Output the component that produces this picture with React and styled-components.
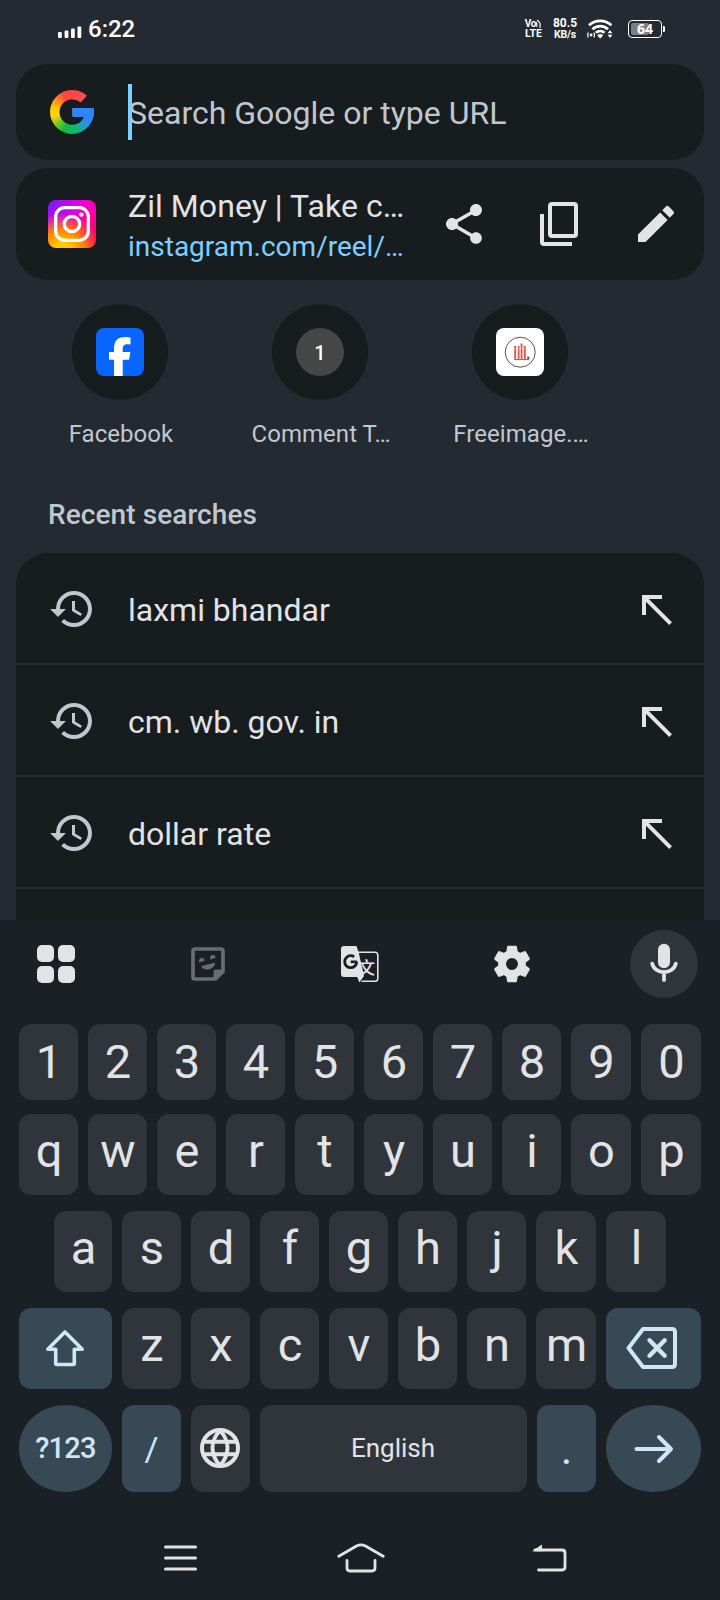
import React from "react";
import styled, { createGlobalStyle } from "styled-components";
import { MdShare, MdEdit, MdHistory, MdNorthWest, MdSettings } from "react-icons/md";

const c = {
  page: "#232a31",
  card: "#171c1f",
  line: "#24292d",
  text: "#e2e3e5",
  muted: "#c1c7ce",
  link: "#7cd0ff",
  board: "#1b1f26",
  key: "#2f353b",
  accentKey: "#374955",
  accentText: "#cfe5f8",
};

const GlobalStyle = createGlobalStyle`
  * { box-sizing: border-box; }
  body {
    margin: 0;
    background: ${c.page};
    font-family: Roboto, "Noto Sans", sans-serif;
    color: ${c.text};
  }
  svg { display: block; flex: none; }
`;

const Screen = styled.div`
  width: 720px;
  height: 1600px;
  display: flex;
  flex-direction: column;
  background: ${c.page};
  overflow: hidden;
`;

/* ---------- status bar ---------- */

const StatusBar = styled.header`
  flex: none;
  height: 64px;
  padding: 0 58px 7px 58px;
  display: flex;
  align-items: center;
  color: #fff;
`;

const Clock = styled.span`
  margin-left: 6px;
  font-size: 24px;
  font-weight: 500;
  line-height: 28px;
  padding-top: 1px;
`;

const StatusIcons = styled.div`
  margin-left: auto;
  display: flex;
  align-items: center;
`;

const Stacked = styled.div`
  display: flex;
  flex-direction: column;
  align-items: center;
  width: ${(p) => p.$width}px;
  margin-right: ${(p) => p.$after}px;
  font-weight: 700;
  white-space: nowrap;
`;

const TinyLine = styled.span`
  display: flex;
  font-size: ${(p) => p.$size}px;
  line-height: ${(p) => p.$leading || 10}px;
  letter-spacing: ${(p) => p.$track || 0}px;
`;

const Battery = styled.div`
  position: relative;
  width: 34px;
  height: 18px;
  margin-left: 15px;
  border: 1.5px solid #fff;
  border-radius: 4px;
  padding: 2px;
  display: flex;

  &::after {
    content: "";
    position: absolute;
    right: -3.5px;
    top: 5px;
    width: 2px;
    height: 6px;
    border-radius: 0 1px 1px 0;
    background: #fff;
  }
`;

const Charge = styled.div`
  width: 64%;
  border-radius: 2px;
  background: #7b8085;
`;

const BatteryLevel = styled.span`
  position: absolute;
  inset: 0;
  text-align: center;
  font: 700 14px/16px "Open Sans", sans-serif;
`;

/* ---------- omnibox ---------- */

const Card = styled.section`
  flex: none;
  height: ${(p) => p.$height}px;
  margin: 0 16px ${(p) => p.$after || 0}px;
  padding: 0 24px 0 32px;
  border-radius: 32px;
  background: ${c.card};
  display: flex;
  align-items: center;
`;

const GoogleMark = styled.div`
  width: 44px;
  height: 44px;
  margin: 0 34px 0 2px;
  background: linear-gradient(#3186ff, #3186ff) 22px 17px / 22px 10px no-repeat,
    conic-gradient(
      #ff4641 0deg,
      #fd4b5f 45deg,
      #3186ff 70deg,
      #3186ff 118deg,
      #22a0b8 143deg,
      #0ebc5f 172deg,
      #14bb45 205deg,
      #7fc91d 232deg,
      #ffd314 258deg,
      #ffcc00 282deg,
      #ff8c1e 308deg,
      #ff4641 335deg,
      #ff4641 360deg
    );
  clip-path: path(
    "M37 5.8 A22 22 0 1 0 44 22 Q44 19.9 43.7 18 H22.4 V26.8 H34 A12.7 12.7 0 1 1 30.6 12.6 Z"
  );
`;

const Placeholder = styled.div`
  position: relative;
  font-size: 32px;
  line-height: 40px;
  padding-top: 1px;
  color: ${c.muted};
  white-space: nowrap;
`;

const Caret = styled.i`
  position: absolute;
  left: 0;
  top: -8px;
  width: 4px;
  height: 56px;
  background: ${c.link};
`;

const InstagramTile = styled.div`
  width: 48px;
  height: 48px;
  margin-right: 32px;
  border-radius: 8px;
  background: radial-gradient(circle at 30% 108%, #ffc800 0 14%, #ff8a00 34%, transparent 62%),
    radial-gradient(circle at 0% 0%, #6a1bff 0%, #b80cf0 28%, transparent 55%),
    linear-gradient(160deg, #f400d8 20%, #ff0090 55%, #ff0060 85%);
`;

const PageInfo = styled.div`
  width: 280px;
  margin-right: 32px;
  align-self: flex-start;
  padding-top: 18px;
`;

const PageTitle = styled.div`
  font-size: 32px;
  line-height: 40px;
  letter-spacing: 0.05px;
  white-space: nowrap;
`;

const PageUrl = styled.div`
  font-size: 28px;
  line-height: 41px;
  color: ${c.link};
  white-space: nowrap;
`;

const Actions = styled.div`
  display: flex;
  gap: 48px;
`;

/* ---------- shortcuts ---------- */

const Shortcuts = styled.nav`
  flex: none;
  display: flex;
  height: 217px;
  padding: 24px 0 0 20px;
`;

const Shortcut = styled.div`
  width: 200px;
  display: flex;
  flex-direction: column;
  align-items: center;
  gap: 18px;
`;

const ShortcutLabel = styled.span`
  padding-left: 2px;
  font-size: 24px;
  line-height: 32px;
  letter-spacing: 0.05px;
  color: ${c.muted};
`;

const Disc = styled.div`
  width: 96px;
  height: 96px;
  border-radius: 50%;
  background: ${c.card};
  display: flex;
  align-items: center;
  justify-content: center;
`;

const Monogram = styled.span`
  width: 48px;
  height: 48px;
  border-radius: 50%;
  background: #454745;
  color: #fff;
  text-align: center;
  font-size: 20px;
  font-weight: 500;
  line-height: 50px;
`;

/* ---------- recent searches ---------- */

const SectionTitle = styled.h2`
  flex: none;
  margin: 0 0 20px;
  padding-left: 48px;
  font-size: 28px;
  font-weight: 500;
  line-height: 36px;
  letter-spacing: 0.08px;
  color: ${c.muted};
`;

const RecentList = styled.ul`
  flex: 1;
  min-height: 0;
  overflow: hidden;
  list-style: none;
  margin: 0 16px;
  padding: 0;
  border-radius: 32px 32px 0 0;
  background: ${c.card};
`;

const RecentItem = styled.li`
  height: 112px;
  border-bottom: 2px solid ${c.line};
  padding: 1px 24px 0 32px;
  display: flex;
  align-items: center;
  font-size: 32px;

  svg:first-child { color: ${c.muted}; }
`;

const Query = styled.span`
  flex: 1;
  padding: 2px 0 0 32px;
`;

/* ---------- keyboard ---------- */

const Keyboard = styled.section`
  flex: none;
  height: 680px;
  background: ${c.board};
  display: flex;
  flex-direction: column;
`;

const Tools = styled.div`
  display: flex;
  justify-content: space-between;
  height: 78px;
  padding: 10px 22px 0;
  margin-bottom: 26px;
`;

const Tool = styled.div`
  width: 68px;
  height: 68px;
  border-radius: 50%;
  display: flex;
  align-items: center;
  justify-content: center;
  color: ${c.text};
  background: ${(p) => (p.$filled ? c.key : "transparent")};
`;

const GearIcon = styled(MdSettings)`
  stroke: ${c.text};
  stroke-width: 0.7px;
  stroke-linejoin: round;

  path[fill="none"] { stroke: none; }
`;

const KeyRow = styled.div`
  display: flex;
  gap: 10px;
  height: ${(p) => p.$height}px;
  margin-bottom: ${(p) => p.$after}px;
  padding-left: ${(p) => p.$indent || 19}px;
`;

const Key = styled.div`
  width: ${(p) => p.$width || 59}px;
  border-radius: ${(p) => (p.$round ? "47px / 43.5px" : "12px")};
  background: ${(p) => (p.$accent ? c.accentKey : c.key)};
  color: ${(p) => (p.$accent ? c.accentText : c.text)};
  display: flex;
  align-items: center;
  justify-content: center;
  font-size: ${(p) => p.$size || 47}px;
  font-weight: ${(p) => p.$weight || 400};
  letter-spacing: ${(p) => p.$track || 0}px;
  line-height: 56px;
  padding: 0 ${(p) => p.$nudge || 0}px ${(p) => p.$lift || 0}px 0;
`;

const LetterKey = styled(Key)`
  padding-left: 1px;
`;

const SystemNav = styled.footer`
  flex: 1;
  display: flex;
  align-items: center;
  gap: 140px;
  padding: 24px 0 0 164px;

  svg:last-child { margin-left: 7px; }
`;

/* ---------- drawings ---------- */

const SignalBars = () => (
  <svg width="24" height="18" viewBox="0 0 24 18" fill="#fff">
    <rect x="0" y="12" width="3.8" height="6" rx="1" />
    <rect x="6.6" y="10.5" width="3.8" height="7.5" rx="1" />
    <rect x="13" y="8.5" width="3.8" height="9.5" rx="1" />
    <rect x="19.5" y="6.5" width="3.8" height="11.5" rx="1" />
  </svg>
);

const VoiceWaves = () => (
  <svg width="6" height="10" viewBox="0 0 6 10" fill="none" stroke="#fff" strokeWidth="1.2">
    <path d="M0 3.2q1.6 1.8 .4 4.6M1 1q4.2 2.6 2.8 7.8" />
  </svg>
);

const Wifi = () => (
  <svg width="26" height="20" viewBox="0 0 26 20" fill="none" stroke="#fff">
    <path d="M2 6.3a16.2 16.2 0 0 1 22.4 0" strokeWidth="2.8" />
    <path d="M5.4 10.2a11.3 11.3 0 0 1 15.6 0" strokeWidth="2.8" />
    <path d="M8.8 13.8a6.6 6.6 0 0 1 8.8 0" strokeWidth="2.6" />
    <path d="M10.2 16.4q3-2.6 6 0l-3 3z" fill="#fff" stroke="none" />
    <path d="M1.4 13.6q-1.3 2.4 0 4.8M6.8 13.6q1.3 2.4 0 4.8" strokeWidth="1.2" />
    <circle cx="4.1" cy="16" r="1.4" fill="#fff" stroke="none" />
    <path d="M23 11l2.4 3.3h-4.8zM23 19l2.4-3.3h-4.8z" fill="#fff" stroke="none" />
  </svg>
);

const InstagramGlyph = () => (
  <svg width="48" height="48" viewBox="0 0 48 48" fill="none" stroke="#fff" strokeWidth="3.3">
    <rect x="7.7" y="7.7" width="32.6" height="32.6" rx="9" />
    <circle cx="24" cy="24" r="7.7" />
    <circle cx="33.4" cy="14.6" r="2.2" fill="#fff" stroke="none" />
  </svg>
);

const CopyIcon = () => (
  <svg width="48" height="48" viewBox="0 0 48 48" fill="none" stroke={c.text} strokeWidth="4">
    <rect x="14" y="4" width="26" height="32" rx="2" />
    <path d="M6 14V42q0 2 2 2H36" />
  </svg>
);

const FacebookTile = () => (
  <svg width="48" height="48" viewBox="0 0 48 48">
    <rect width="48" height="48" rx="8" fill="#0866ff" />
    <path
      d="M18 48V31.7h-5V24h5v-3.2C18 12.8 21.6 9 29.3 9c1.5 0 4.1.3 5.2.6v6.8c-.6-.1-1.6-.1-2.8-.1-3.8 0-5 1.5-5 5V24h7.7l-1.3 7.7h-6.4V48z"
      fill="#fff"
    />
  </svg>
);

const FreeimageTile = () => (
  <svg width="48" height="48" viewBox="0 0 48 48">
    <rect width="48" height="48" rx="8" fill="#fff" />
    <circle cx="24.2" cy="24.2" r="15" fill="none" stroke="#555" strokeWidth="1" />
    <g fill="#e0574d">
      <rect x="18.2" y="18" width="1.9" height="12.8" />
      <rect x="21.8" y="18" width="1.7" height="12.8" />
      <rect x="24.6" y="15.5" width="1.9" height="15.3" />
      <rect x="27.8" y="18" width="2" height="12.8" />
    </g>
    <path d="M18 20.4h12" stroke="#fff" strokeWidth=".6" opacity=".5" />
    <path d="M18.2 31.5h15" stroke="#777" strokeWidth="1.2" />
    <circle cx="32.3" cy="29.8" r="1.2" fill="#555" />
  </svg>
);

const GridIcon = () => (
  <svg width="38" height="38" viewBox="0 0 38 38" fill={c.text}>
    <rect width="17" height="17" rx="5" />
    <rect x="21" width="17" height="17" rx="5" />
    <rect y="21" width="17" height="17" rx="5" />
    <rect x="21" y="21" width="17" height="17" rx="5" />
  </svg>
);

const StickerIcon = () => (
  <svg width="34" height="34" viewBox="0 0 34 34" fill="#696c71">
    <path d="M4 2h26q2 0 2 2v20.5L24.5 32H4q-2 0-2-2V4q0-2 2-2z" fill="none" stroke="#696c71" strokeWidth="3.7" />
    <path d="M22.5 32.5V25q0-2.5 2.5-2.5h8z" />
    <path d="M8 15.3c-.6-5.5 5.3-6.3 5.600-1.200zM19 12.400c-.7-5.500 5-6.300 5.600-1.300z" />
    <path d="M10 19.200l14.200-3.800c-.5 8-11.500 9-14.200 3.800z" />
  </svg>
);

const TranslateIcon = () => (
  <svg width="38" height="38" viewBox="0 0 38 38">
    <path d="M17 7.2h17q2.8 0 2.8 2.8v23.5q0 2.8-2.8 2.8H20.5" fill="none" stroke={c.text} strokeWidth="1.6" />
    <path d="M3 1h12.5l2.3 7L23 31l-4.7 6.5-2-5.5H3q-3 0-3-3V4q0-3 3-3z" fill={c.text} />
    <text x="17" y="28.6" fontSize="17" fontFamily="Noto Sans CJK SC, sans-serif" fontWeight="500" fill={c.text}>文</text>
    <circle cx="9.7" cy="16.7" r="6" fill="none" stroke={c.board} strokeWidth="2.8" strokeDasharray="31.2 6.5" />
    <path d="M9.7 16.8h6.3" stroke={c.board} strokeWidth="2.6" fill="none" />
  </svg>
);

const MicIcon = () => (
  <svg width="48" height="48" viewBox="0 0 24 24" fill="none" stroke={c.text} strokeWidth="1.9" strokeLinecap="round">
    <rect x="9" y="1.9" width="6" height="12.2" rx="3" fill={c.text} stroke="none" />
    <path d="M6.1 11.8a6 5.3 0 0 0 11.8 0M12 17.5v2.5" />
  </svg>
);

const ShiftIcon = () => (
  <svg width="40" height="40" viewBox="0 0 40 40" fill="none" stroke={c.accentText} strokeWidth="3.6" strokeLinejoin="round">
    <path d="M20 4L37.2 21.3H29.3V35.5q0 1-1 1H11.7q-1 0-1-1V21.3H2.8z" />
  </svg>
);

const BackspaceIcon = () => (
  <svg width="52" height="44" viewBox="0 0 52 44" fill="none" stroke={c.accentText} strokeWidth="4" strokeLinejoin="round" strokeLinecap="round">
    <path d="M17 3H46q3 0 3 3V38q0 3-3 3H17L2.5 22z" />
    <path d="M23.500 14.300l15.200 15.400M38.700 14.300L23.500 29.700" strokeWidth="4.400" />
  </svg>
);

const GlobeIcon = () => (
  <svg width="40" height="40" viewBox="0 0 40 40" fill="none" stroke={c.text} strokeWidth="4">
    <circle cx="20" cy="20" r="18" />
    <path d="M20 2.5q-7.5 8-7.5 17.5T20 37.5Q27.5 29.5 27.5 20T20 2.5zM3.5 13.8h33M3.5 26.2h33" strokeWidth="3.9" />
  </svg>
);

const GoIcon = () => (
  <svg width="40" height="30" viewBox="0 0 40 30" fill="none" stroke={c.accentText} strokeWidth="4" strokeLinecap="round" strokeLinejoin="round">
    <path d="M2.5 15H36M25 3l12 12-12 12" />
  </svg>
);

const MenuIcon = () => (
  <svg width="33" height="26" viewBox="0 0 33 26" stroke={c.text} strokeWidth="3" strokeLinecap="round">
    <path d="M1.5 2h30M1.5 13h30M1.5 24h30" />
  </svg>
);

const HomeIcon = () => (
  <svg width="48" height="30" viewBox="0 0 48 30" fill="none" stroke={c.text} strokeWidth="2.8" strokeLinecap="round">
    <path d="M1.8 13.2L19.5 3Q24 .6 28.5 3L46.2 13.2" />
    <path d="M10 17.5V25q0 3 3 3H35q3 0 3-3V17.5" />
  </svg>
);

const BackIcon = () => (
  <svg width="35" height="28" viewBox="0 0 35 28" fill="none" stroke={c.text} strokeWidth="2.8" strokeLinecap="round">
    <path d="M3 6H30q3 0 3 3V23q0 3-3 3H6.5" />
    <path d="M0 7.2L10 .5V7.2z" fill={c.text} stroke="none" />
  </svg>
);

/* ---------- content ---------- */

const shortcuts = [
  { label: "Facebook", icon: <FacebookTile /> },
  { label: "Comment T…", icon: <Monogram>1</Monogram> },
  { label: "Freeimage.…", icon: <FreeimageTile /> },
];

const searches = ["laxmi bhandar", "cm. wb. gov. in", "dollar rate"];

const letterKeys = (letters, widths = {}) =>
  [...letters].map((ch) => (
    <LetterKey key={ch} $width={widths[ch]} $lift={/\d/.test(ch) ? 0 : 7}>
      {ch}
    </LetterKey>
  ));

export default function App() {
  return (
    <>
      <GlobalStyle />
      <Screen>
        <StatusBar>
          <SignalBars />
          <Clock>6:22</Clock>
          <StatusIcons>
            <Stacked $width={19} $after={9}>
              <TinyLine $size={10} $track={-0.2}>
                Vo
                <VoiceWaves />
              </TinyLine>
              <TinyLine $size={10.5}>LTE</TinyLine>
            </Stacked>
            <Stacked $width={26} $after={9}>
              <TinyLine $size={12} $leading={11}>80.5</TinyLine>
              <TinyLine $size={10.5} $leading={11} $track={-0.2}>KB/s</TinyLine>
            </Stacked>
            <Wifi />
            <Battery>
              <Charge />
              <BatteryLevel>64</BatteryLevel>
            </Battery>
          </StatusIcons>
        </StatusBar>

        <Card $height={96} $after={8}>
          <GoogleMark />
          <Placeholder>
            <Caret />
            Search Google or type URL
          </Placeholder>
        </Card>

        <Card $height={112}>
          <InstagramTile>
            <InstagramGlyph />
          </InstagramTile>
          <PageInfo>
            <PageTitle>Zil Money | Take c…</PageTitle>
            <PageUrl>instagram.com/reel/…</PageUrl>
          </PageInfo>
          <Actions>
            <MdShare size={48} />
            <CopyIcon />
            <MdEdit size={48} />
          </Actions>
        </Card>

        <Shortcuts>
          {shortcuts.map((s) => (
            <Shortcut key={s.label}>
              <Disc>{s.icon}</Disc>
              <ShortcutLabel>{s.label}</ShortcutLabel>
            </Shortcut>
          ))}
        </Shortcuts>

        <SectionTitle>Recent searches</SectionTitle>
        <RecentList>
          {searches.map((q) => (
            <RecentItem key={q}>
              <MdHistory size={48} />
              <Query>{q}</Query>
              <MdNorthWest size={48} />
            </RecentItem>
          ))}
        </RecentList>

        <Keyboard>
          <Tools>
            <Tool><GridIcon /></Tool>
            <Tool><StickerIcon /></Tool>
            <Tool><TranslateIcon /></Tool>
            <Tool><GearIcon size={44} /></Tool>
            <Tool $filled><MicIcon /></Tool>
          </Tools>
          <KeyRow $height={76} $after={14}>{letterKeys("1234567890", { 9: 60, 0: 60 })}</KeyRow>
          <KeyRow $height={81} $after={16}>{letterKeys("qwertyuiop", { o: 60, p: 60 })}</KeyRow>
          <KeyRow $height={81} $after={16} $indent={54}>
            {letterKeys("asdfghjkl", { a: 58, k: 60, l: 60 })}
          </KeyRow>
          <KeyRow $height={81} $after={16}>
            <Key $accent $width={93} $nudge={1} $lift={2}><ShiftIcon /></Key>
            {letterKeys("zxcvbnm", { m: 60 })}
            <Key $accent $width={95} $nudge={4} $lift={1}><BackspaceIcon /></Key>
          </KeyRow>
          <KeyRow $height={87} $after={0}>
            <Key $accent $round $width={93} $size={29} $track={-0.8} $weight={500} $lift={2}>?123</Key>
            <Key $accent $size={34}>/</Key>
            <Key $nudge={1} $lift={1}><GlobeIcon /></Key>
            <Key $width={267} $size={26} $nudge={1} $lift={2}>English</Key>
            <Key $accent $size={44}>.</Key>
            <Key $accent $round $width={95}><GoIcon /></Key>
          </KeyRow>
          <SystemNav>
            <MenuIcon />
            <HomeIcon />
            <BackIcon />
          </SystemNav>
        </Keyboard>
      </Screen>
    </>
  );
}
